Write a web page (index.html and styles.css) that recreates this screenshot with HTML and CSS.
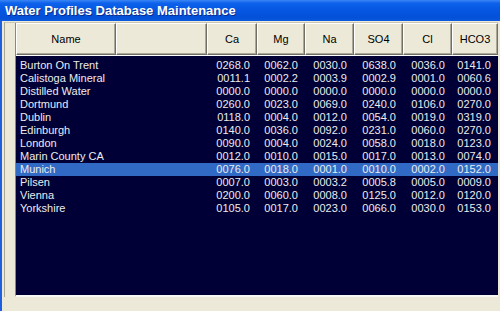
FILE: index.html
```html
<!DOCTYPE html>
<html>
<head>
<meta charset="utf-8">
<link rel="stylesheet" href="styles.css">
</head>
<body>
<div class="window">
  <div class="titlebar"><span class="title">Water Profiles Database Maintenance</span></div>
  <div class="client">
    <div class="panel">
      <div class="list">
        <div class="header grid">
          <div class="hcell">Name</div>
          <div class="hcell"></div>
          <div class="hcell">Ca</div>
          <div class="hcell">Mg</div>
          <div class="hcell">Na</div>
          <div class="hcell">SO4</div>
          <div class="hcell">Cl</div>
          <div class="hcell last">HCO3</div>
        </div>
        <div class="rows">
          <div class="row grid"><span class="name">Burton On Trent</span><span></span><span class="num">0268.0</span><span class="num">0062.0</span><span class="num">0030.0</span><span class="num">0638.0</span><span class="num">0036.0</span><span class="num">0141.0</span></div>
          <div class="row grid"><span class="name">Calistoga Mineral</span><span></span><span class="num">0011.1</span><span class="num">0002.2</span><span class="num">0003.9</span><span class="num">0002.9</span><span class="num">0001.0</span><span class="num">0060.6</span></div>
          <div class="row grid"><span class="name">Distilled Water</span><span></span><span class="num">0000.0</span><span class="num">0000.0</span><span class="num">0000.0</span><span class="num">0000.0</span><span class="num">0000.0</span><span class="num">0000.0</span></div>
          <div class="row grid"><span class="name">Dortmund</span><span></span><span class="num">0260.0</span><span class="num">0023.0</span><span class="num">0069.0</span><span class="num">0240.0</span><span class="num">0106.0</span><span class="num">0270.0</span></div>
          <div class="row grid"><span class="name">Dublin</span><span></span><span class="num">0118.0</span><span class="num">0004.0</span><span class="num">0012.0</span><span class="num">0054.0</span><span class="num">0019.0</span><span class="num">0319.0</span></div>
          <div class="row grid"><span class="name">Edinburgh</span><span></span><span class="num">0140.0</span><span class="num">0036.0</span><span class="num">0092.0</span><span class="num">0231.0</span><span class="num">0060.0</span><span class="num">0270.0</span></div>
          <div class="row grid"><span class="name">London</span><span></span><span class="num">0090.0</span><span class="num">0004.0</span><span class="num">0024.0</span><span class="num">0058.0</span><span class="num">0018.0</span><span class="num">0123.0</span></div>
          <div class="row grid"><span class="name">Marin County CA</span><span></span><span class="num">0012.0</span><span class="num">0010.0</span><span class="num">0015.0</span><span class="num">0017.0</span><span class="num">0013.0</span><span class="num">0074.0</span></div>
          <div class="row grid selected"><span class="name">Munich</span><span></span><span class="num">0076.0</span><span class="num">0018.0</span><span class="num">0001.0</span><span class="num">0010.0</span><span class="num">0002.0</span><span class="num">0152.0</span></div>
          <div class="row grid"><span class="name">Pilsen</span><span></span><span class="num">0007.0</span><span class="num">0003.0</span><span class="num">0003.2</span><span class="num">0005.8</span><span class="num">0005.0</span><span class="num">0009.0</span></div>
          <div class="row grid"><span class="name">Vienna</span><span></span><span class="num">0200.0</span><span class="num">0060.0</span><span class="num">0008.0</span><span class="num">0125.0</span><span class="num">0012.0</span><span class="num">0120.0</span></div>
          <div class="row grid"><span class="name">Yorkshire</span><span></span><span class="num">0105.0</span><span class="num">0017.0</span><span class="num">0023.0</span><span class="num">0066.0</span><span class="num">0030.0</span><span class="num">0153.0</span></div>
        </div>
      </div>
    </div>
  </div>
</div>
</body>
</html>
```
FILE: styles.css
```css
* { box-sizing: border-box; }
html, body {
  margin: 0;
  padding: 0;
  width: 500px;
  height: 311px;
  overflow: hidden;
  background: #ECE9D8;
  font-family: "Liberation Sans", Arial, sans-serif;
}
.window {
  width: 500px;
  height: 311px;
  display: flex;
  flex-direction: column;
}
.titlebar {
  height: 21px;
  flex: none;
  background: linear-gradient(#3a86f6 0, #0d61ea 15%, #0556e2 50%, #0450d8 85%, #0a5ae0 100%);
  display: flex;
  align-items: center;
  padding-left: 5px;
}
.title {
  color: #fff;
  font-weight: bold;
  font-size: 13px;
  letter-spacing: 0;
  text-shadow: 1px 1px 0 #0a2a8a;
}
.client {
  flex: 1;
  display: flex;
  border-left: 2px solid #1c5fe0;
  padding: 1px 2px 14px 2px;
  background: #ECE9D8;
}
.panel {
  flex: 1;
  display: flex;
  border-left: 1px solid #a9a797;
  border-top: 1px solid #c9c6b6;
  padding-left: 10px;
}
.list {
  flex: 1;
  display: flex;
  flex-direction: column;
  border-left: 1px solid #8a8878;
  border-bottom: 2px solid #f8f8f4;
}
.grid {
  display: grid;
  grid-template-columns: 100px 91px 50px 48px 49px 49px 49px 1fr;
}
.header {
  height: 33px;
  flex: none;
  background: #ECE9D8;
  border-bottom: 1px solid #fff;
}
.hcell {
  display: flex;
  align-items: center;
  justify-content: center;
  font-size: 11px;
  color: #000;
  border-top: 1px solid #fff;
  border-left: 1px solid #fff;
  border-right: 1px solid #716f64;
  border-bottom: 1px solid #716f64;
  box-shadow: inset -1px -1px 0 #aca899;
}
.rows {
  flex: 1;
  background: #000036;
  padding-top: 3px;
  color: #ececec;
  font-size: 11px;
}
.row {
  height: 13px;
  line-height: 13px;
}
.row.selected {
  background: #316AC5;
}
.name {
  padding-left: 4px;
  white-space: nowrap;
}
.num {
  text-align: right;
  padding-right: 7px;
}
```
